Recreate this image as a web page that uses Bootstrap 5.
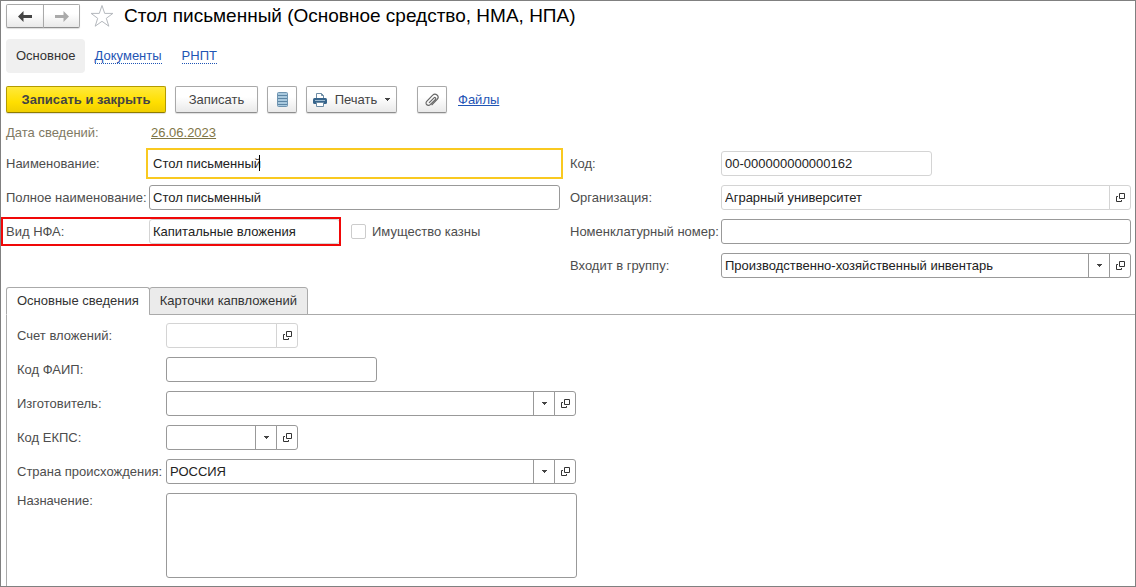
<!DOCTYPE html>
<html lang="ru">
<head>
<meta charset="utf-8">
<meta name="viewport" content="width=device-width, initial-scale=1">
<title>Стол письменный (Основное средство, НМА, НПА)</title>
<link href="https://cdn.jsdelivr.net/npm/bootstrap@5.3.0/dist/css/bootstrap.min.css" rel="stylesheet">
<style>
  body { font-family: "Liberation Sans", Arial, sans-serif; font-size: 13px; line-height: 16px; color: #4d4d4d; background: #fff; }
  .app-window { min-height: 100vh; border: 1px solid #808080; padding: 3px 0 0 5px; }
  .title-text { font-size: 19px; line-height: 24px; color: #000; font-weight: 400; }
  a { color: #1f55b5; }

  /* buttons */
  .tool-btn { --bs-btn-color: #444; --bs-btn-hover-color: #222; --bs-btn-font-size: 13px; --bs-btn-line-height: 16px;
    --bs-btn-padding-x: 0; --bs-btn-padding-y: 0; --bs-btn-border-radius: 2px;
    height: 27px; border: 1px solid #a9a9a9; border-bottom-color: #8e8e8e;
    background: linear-gradient(#fff 40%, #e9e9e9); box-shadow: 0 1px 1px #ddd; }
  .tool-btn.primary { width: 160px; border-color: #b39b00; border-bottom-color: #8f7c00; color: #444; font-weight: 700;
    background: linear-gradient(#ffe93b, #ffdf00 60%, #f0cf00); }
  .tool-btn.icon-only { width: 30px; }
  .tool-btn.save { width: 83px; }
  .tool-btn.print { width: 91px; }
  .toolbar { column-gap: 9px; }
  .toolbar .attach { margin-left: 11px; }
  .toolbar .files { margin-left: 2px; }
  .history .tool-btn { width: 37px; height: 24px; }
  .history .tool-btn:first-child { width: 38px; }

  /* section navigation */
  .section-nav { margin-top: 11px; }
  .section-nav .nav-link { padding: 0 10px; height: 34px; color: #1f55b5; }
  .section-nav .nav-link.active { padding-right: 9px; background: #f0f0f0; color: #333; border-radius: 4px; }
  .section-nav .dotted { border-bottom: 1px dotted #1f55b5; line-height: 14px; }
  .toolbar { margin-top: 13px; }

  /* form rows */
  .main-form { display: grid; grid-template-columns: minmax(0, 1fr) minmax(0, 1fr); column-gap: 3px; padding-right: 4px; }
  .left-stack { padding-right: 7px; }
  .field-row { display: flex; align-items: center; min-height: 25px; position: relative; }
  .field-stack { display: grid; gap: 9px; align-content: start; }
  .field-stack label { flex: none; white-space: nowrap; }
  .lbl-left { width: 143px; }
  .lbl-right { width: 151px; }
  .lbl-tab { width: 149px; }
  .form-control.box { height: 25px; min-height: 25px; padding: 0 3px; font-size: 13px; line-height: 16px; color: #222; border: 1px solid #999; border-radius: 3px; min-width: 0; }
  .form-control.box.soft, .soft .form-control.box, .soft .side-btn { border-color: #d4d4d4; }
  .form-control.box.focused { border-color: transparent; border-radius: 0; outline: 2px solid #f9c920; outline-offset: 1px; box-shadow: none; }
  .text-caret { position: absolute; left: 110px; top: 4px; width: 1px; height: 16px; background: #000; }
  .side-btn { flex: none; width: 22px; height: 25px; padding: 0; border: 1px solid #999; background: #fff; display: flex; align-items: center; justify-content: center; border-radius: 3px; }
  .form-control.w-kind { flex: none; width: 191px; }
  .w-code { max-width: 211px; }
  .w-wide { max-width: 410px; }
  .w-short { max-width: 132px; }
  .marked::after { content: ""; position: absolute; inset: -2px -1px -2px -5px; border: 2px solid #f00808; pointer-events: none; }
  .tick-wrap { margin-left: 11px; }
  .form-check-input.tick { width: 15px; height: 15px; margin: 0 6px 0 0; border: 1px solid #ccc; border-radius: 2px; }
  .date-row { color: #7f7a64; margin: 7px 0 6px; }
  .date-row a { color: #7f7648; margin-left: 2px; }

  /* page tabs */
  .page-tabs { border-bottom: 1px solid #aaa; margin-top: 9px; }
  .page-tabs .nav-link { height: 28px; padding: 0 10px; margin-bottom: -1px; border: 1px solid #aaa; border-radius: 3px 3px 0 0; color: #333; background: #ebebeb; }
  .page-tabs .nav-link.active { background: #fff; border-bottom-color: #fff; color: #333; }
  .page-tabs .nav-item + .nav-item { margin-left: -1px; }
  .page-body { border-left: 1px solid #aaa; padding: 8px 10px; }
  .form-control.notes { height: 85px; padding: 3px; resize: none; max-width: 411px; }
</style>
</head>
<body>
<svg class="d-none">
  <symbol id="i-open" viewBox="0 0 9 9"><path d="M3.5.5h5v5h-5zM2 3.500H.5v5h5V7" fill="none" stroke="#333"/></symbol>
  <symbol id="i-drop" viewBox="0 0 5 3"><path d="M0 0h5v1H4v1H3v1H2V2H1V1H0z" fill="#444"/></symbol>
</svg>
<main class="app-window d-flex flex-column">
  <header class="d-flex align-items-center">
    <div class="history btn-group">
      <button type="button" class="btn tool-btn d-flex align-items-center justify-content-center" aria-label="Назад">
        <svg width="14" height="11" viewBox="0 0 14 11"><path d="M5.500 0v4H14v3H5.500v4L0 5.500z" fill="#444"/></svg></button>
      <button type="button" class="btn tool-btn d-flex align-items-center justify-content-center" aria-label="Вперед">
        <svg width="14" height="11" viewBox="0 0 14 11"><path d="M8.500 0v4H0v3h8.500v4L14 5.500z" fill="#aaa"/></svg></button>
    </div>
    <svg class="ms-2 me-2" width="28" height="24" viewBox="0 0 28 24"><path d="M14 1.500l2.700 7.900h8.200l-6.600 4.900 2.500 7.900-6.800-4.900-6.800 4.900 2.500-7.900-6.600-4.900h8.200z" fill="#fff" stroke="#b4b8bd"/></svg>
    <h1 class="title-text m-0">Стол письменный (Основное средство, НМА, НПА)</h1>
  </header>

  <nav class="section-nav nav">
    <a class="nav-link active d-flex align-items-center" href="#">Основное</a>
    <a class="nav-link d-flex align-items-center" href="#"><span class="dotted">Документы</span></a>
    <a class="nav-link d-flex align-items-center" href="#"><span class="dotted">РНПТ</span></a>
  </nav>

  <div class="toolbar d-flex align-items-center">
    <button type="button" class="btn tool-btn primary">Записать и закрыть</button>
    <button type="button" class="btn tool-btn save">Записать</button>
    <button type="button" class="btn tool-btn icon-only d-flex align-items-center justify-content-center" aria-label="Список">
      <svg width="11" height="15" viewBox="0 0 11 15"><rect x=".5" y=".5" width="10" height="14" rx="1" fill="#a9c9de" stroke="#6f94b0"/><path d="M1 3.500h9M1 6.500h9M1 9.500h9M1 12.500h9" stroke="#5d86a5"/></svg></button>
    <button type="button" class="btn tool-btn print d-flex align-items-center justify-content-center">
      <svg width="14" height="14" viewBox="0 0 14 14"><path d="M3.500 5V.5h5l2 2V5" fill="#fff" stroke="#6d8ca5"/><path d="M8.500.5v2h2" fill="none" stroke="#6d8ca5"/><rect y="5" width="14" height="6" rx="1.500" fill="#36648b"/><path d="M2 7.500h10" stroke="#9ebbd0"/><path d="M3.500 9.500h7v4h-7z" fill="#fff" stroke="#6d8ca5"/></svg>
      <span class="ms-2 me-2">Печать</span>
      <svg width="5" height="3" viewBox="0 0 5 3"><use href="#i-drop"/></svg></button>
    <button type="button" class="btn tool-btn icon-only attach d-flex align-items-center justify-content-center" aria-label="Присоединить">
      <svg width="14" height="14" viewBox="0 0 14 14"><path d="M4 9.800l5-5a1 1 0 0 1 1.500 1.500l-5.300 5.300a2.300 2.300 0 0 1-3.500-3.300l6-6.100a3 3 0 0 1 4.500 4.100l-5.600 5.800" fill="none" stroke="#666" stroke-width="1.200"/></svg></button>
    <a class="files" href="#">Файлы</a>
  </div>

  <form class="d-flex flex-column flex-grow-1">
    <div class="date-row field-row"><span class="lbl-left">Дата сведений:</span><a class="date-link" href="#">26.06.2023</a></div>

    <div class="main-form">
      <div class="field-stack left-stack">
        <div class="field-row"><label class="lbl-left" for="f-name">Наименование:</label>
          <div class="position-relative flex-grow-1"><input id="f-name" class="form-control box focused" value="Стол письменный"><span class="text-caret"></span></div></div>
        <div class="field-row"><label class="lbl-left" for="f-full">Полное наименование:</label>
          <input id="f-full" class="form-control box" value="Стол письменный"></div>
        <div class="d-flex align-items-center">
          <div class="field-row marked"><label class="lbl-left" for="f-kind">Вид НФА:</label>
            <input id="f-kind" class="form-control box soft w-kind" value="Капитальные вложения" readonly></div>
          <div class="tick-wrap d-flex align-items-center"><input id="f-tr" type="checkbox" class="form-check-input tick"><label for="f-tr">Имущество казны</label></div>
        </div>
      </div>
      <div class="field-stack">
        <div class="field-row"><label class="lbl-right" for="f-code">Код:</label>
          <input id="f-code" class="form-control box soft w-code" value="00-000000000000162" readonly></div>
        <div class="field-row"><label class="lbl-right" for="f-org">Организация:</label>
          <div class="input-group flex-nowrap soft"><input id="f-org" class="form-control box" value="Аграрный университет" readonly>
            <button type="button" class="side-btn" aria-label="Открыть"><svg width="9" height="9"><use href="#i-open"/></svg></button></div></div>
        <div class="field-row"><label class="lbl-right" for="f-nom">Номенклатурный номер:</label>
          <input id="f-nom" class="form-control box"></div>
        <div class="field-row"><label class="lbl-right" for="f-grp">Входит в группу:</label>
          <div class="input-group flex-nowrap"><input id="f-grp" class="form-control box" value="Производственно-хозяйственный инвентарь">
            <button type="button" class="side-btn" aria-label="Выбрать"><svg width="5" height="3"><use href="#i-drop"/></svg></button>
            <button type="button" class="side-btn" aria-label="Открыть"><svg width="9" height="9"><use href="#i-open"/></svg></button></div></div>
      </div>
    </div>

    <ul class="page-tabs nav">
      <li class="nav-item"><a class="nav-link active d-flex align-items-center" href="#">Основные сведения</a></li>
      <li class="nav-item"><a class="nav-link d-flex align-items-center" href="#">Карточки капвложений</a></li>
    </ul>
    <div class="page-body field-stack flex-grow-1">
      <div class="field-row"><label class="lbl-tab" for="t-acc">Счет вложений:</label>
        <div class="input-group flex-nowrap soft w-short"><input id="t-acc" class="form-control box" readonly>
          <button type="button" class="side-btn" aria-label="Открыть"><svg width="9" height="9"><use href="#i-open"/></svg></button></div></div>
      <div class="field-row"><label class="lbl-tab" for="t-faip">Код ФАИП:</label>
        <input id="t-faip" class="form-control box w-code"></div>
      <div class="field-row"><label class="lbl-tab" for="t-man">Изготовитель:</label>
        <div class="input-group flex-nowrap w-wide"><input id="t-man" class="form-control box">
          <button type="button" class="side-btn" aria-label="Выбрать"><svg width="5" height="3"><use href="#i-drop"/></svg></button>
          <button type="button" class="side-btn" aria-label="Открыть"><svg width="9" height="9"><use href="#i-open"/></svg></button></div></div>
      <div class="field-row"><label class="lbl-tab" for="t-ekps">Код ЕКПС:</label>
        <div class="input-group flex-nowrap w-short"><input id="t-ekps" class="form-control box">
          <button type="button" class="side-btn" aria-label="Выбрать"><svg width="5" height="3"><use href="#i-drop"/></svg></button>
          <button type="button" class="side-btn" aria-label="Открыть"><svg width="9" height="9"><use href="#i-open"/></svg></button></div></div>
      <div class="field-row"><label class="lbl-tab" for="t-country">Страна происхождения:</label>
        <div class="input-group flex-nowrap w-wide"><input id="t-country" class="form-control box" value="РОССИЯ">
          <button type="button" class="side-btn" aria-label="Выбрать"><svg width="5" height="3"><use href="#i-drop"/></svg></button>
          <button type="button" class="side-btn" aria-label="Открыть"><svg width="9" height="9"><use href="#i-open"/></svg></button></div></div>
      <div class="field-row align-items-start"><label class="lbl-tab" for="t-purpose">Назначение:</label>
        <textarea id="t-purpose" class="form-control box notes"></textarea></div>
    </div>
  </form>
</main>
<script src="https://cdn.jsdelivr.net/npm/bootstrap@5.3.0/dist/js/bootstrap.bundle.min.js"></script>
</body>
</html>
